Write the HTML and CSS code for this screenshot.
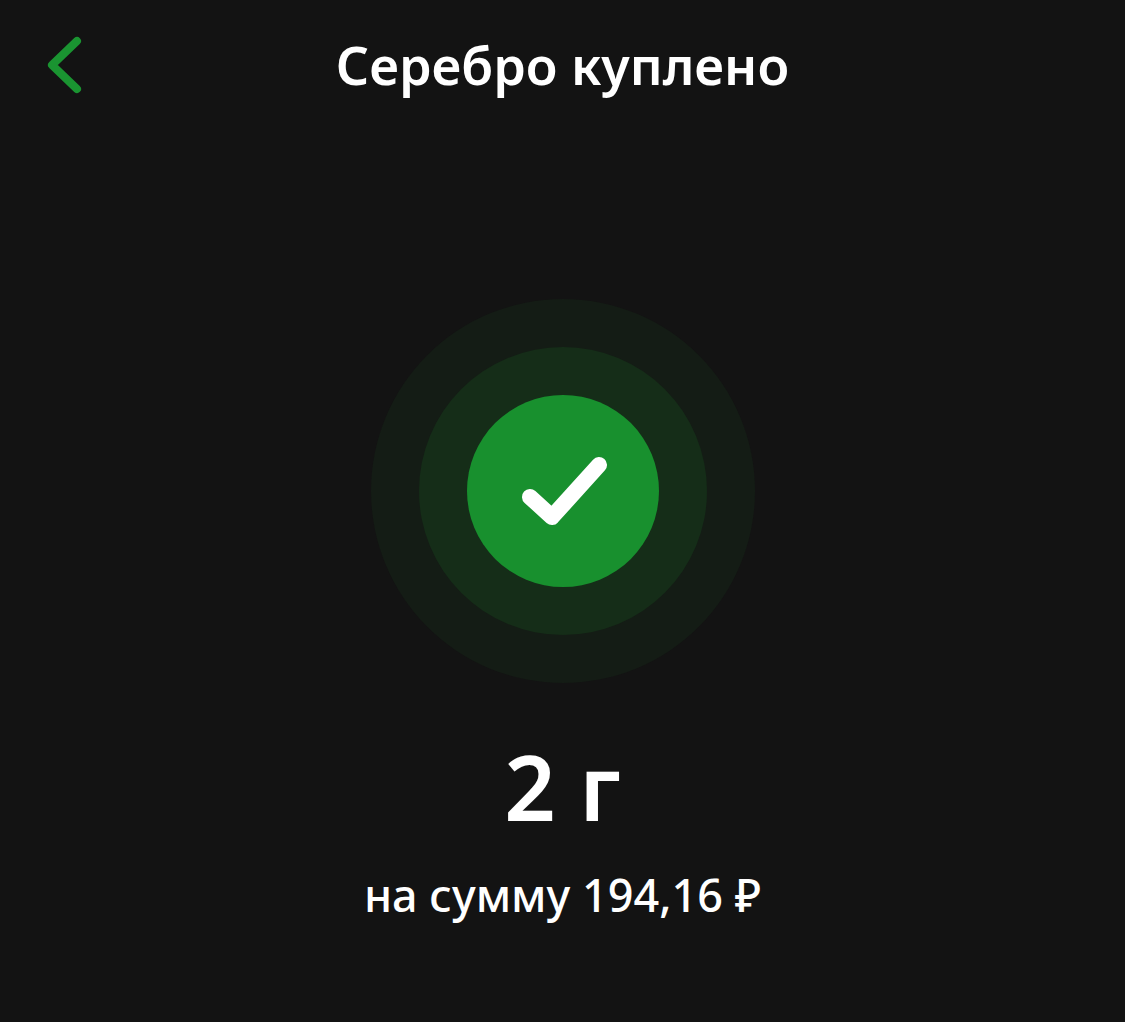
FILE: index.html
```html
<!DOCTYPE html>
<html lang="ru">
<head>
    <meta charset="UTF-8">
    <meta name="viewport" content="width=device-width, initial-scale=1.0">
    <title>Серебро куплено</title>
    <link rel="stylesheet" href="styles.css">
</head>
<body>
    <header class="top-bar">
        <button class="back-btn" aria-label="Назад">
            <svg width="36" height="60" viewBox="0 0 36 60" fill="none">
                <path d="M31 6 L6 30 L31 54" stroke="#1a9431" stroke-width="8" stroke-linecap="round" stroke-linejoin="round"/>
            </svg>
        </button>
        <h1>Серебро куплено</h1>
    </header>

    <main class="result">
        <div class="ring-outer">
            <div class="ring-middle">
                <div class="ring-inner">
                    <svg width="88" height="72" viewBox="0 0 88 72" fill="none">
                        <path d="M11 42 L33 62 L80 10" stroke="#fff" stroke-width="16" stroke-linecap="round" stroke-linejoin="round"/>
                    </svg>
                </div>
            </div>
        </div>
        <div class="amount">2 г</div>
        <div class="sum">на сумму 194,16 ₽</div>
    </main>
</body>
</html>
```

FILE: styles.css
```css
html, body {
    height: 100%;
}
body {
    margin: 0;
    background-color: #131313;
    color: #fff;
    font-family: 'Noto Sans', 'Open Sans', sans-serif;
    overflow: hidden;
}
.top-bar {
    display: flex;
    justify-content: center;
    align-items: center;
    height: 130px;
    margin-bottom: 4px;
    position: relative;
}
.top-bar h1 {
    margin: 0;
    font-size: 52px;
    font-weight: 600;
    line-height: 1;
}
.back-btn {
    position: absolute;
    left: 46px;
    top: 35px;
    padding: 0;
    background: none;
    border: none;
    display: flex;
}
.result {
    display: flex;
    flex-direction: column;
    align-items: center;
    padding-top: 165px;
}
.ring-outer, .ring-middle, .ring-inner {
    display: flex;
    justify-content: center;
    align-items: center;
    border-radius: 50%;
}
.ring-outer {
    width: 384px;
    height: 384px;
    background-color: #141c15;
}
.ring-middle {
    width: 288px;
    height: 288px;
    background-color: #152d18;
}
.ring-inner {
    width: 192px;
    height: 192px;
    background-color: #18902e;
}
.amount {
    margin-top: 43px;
    font-size: 90px;
    font-weight: 600;
    line-height: 120px;
}
.sum {
    margin-top: 19px;
    font-size: 45px;
    font-weight: 500;
    line-height: 60px;
}
```
